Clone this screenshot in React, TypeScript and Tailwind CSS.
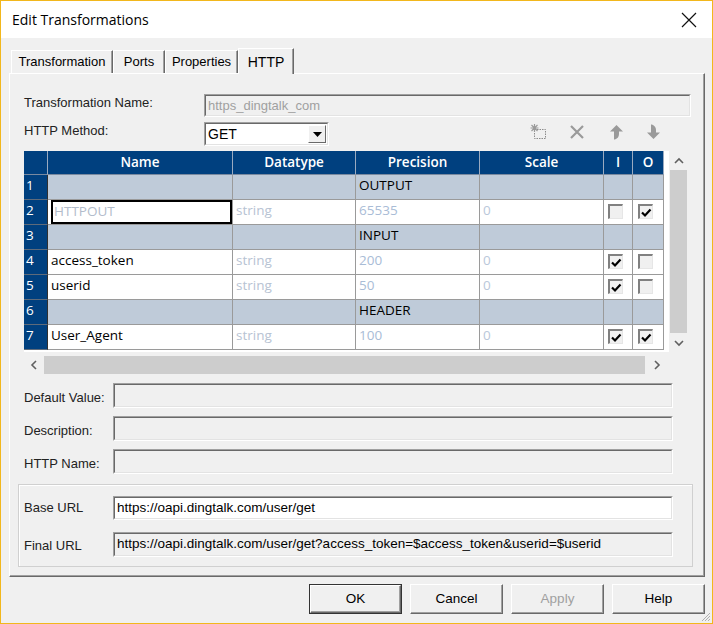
import React from "react";

const grid = "font-['Open_Sans',sans-serif] text-[13.5px]";

type Row = {
  group?: string;
  name?: string;
  dim?: boolean;
  focus?: boolean;
  i?: boolean;
  o?: boolean;
};

const rows: Row[] = [
  { group: "OUTPUT" },
  { name: "HTTPOUT", dim: true, focus: true, i: false, o: true },
  { group: "INPUT" },
  { name: "access_token", i: true, o: false },
  { name: "userid", i: true, o: false },
  { group: "HEADER" },
  { name: "User_Agent", i: true, o: true },
];
const prec = ["", "65535", "", "200", "50", "", "100"];

function Sunken({ className = "", inner = "", children }: { className?: string; inner?: string; children?: React.ReactNode }) {
  return (
    <div className={`border border-t-[#a0a0a0] border-l-[#a0a0a0] border-r-white border-b-white ${className}`}>
      <div className={`h-full border border-t-[#696969] border-l-[#696969] border-r-[#e3e3e3] border-b-[#e3e3e3] ${inner}`}>{children}</div>
    </div>
  );
}

function Check({ on }: { on?: boolean }) {
  return (
    <div className="w-[15px] h-[15px] border-t-2 border-l-2 border-t-[#808080] border-l-[#808080] border-r border-b border-r-[#e6e6e6] border-b-[#e6e6e6] bg-[#f0f0f0] flex items-end justify-center">
      {on && (
        <svg width="11" height="10" viewBox="0 0 11 10">
          <path d="M1 4.5 L4 7.5 L9.5 1.5" stroke="#000" strokeWidth="2.2" fill="none" />
        </svg>
      )}
    </div>
  );
}

function Btn({ label, def, off }: { label: string; def?: boolean; off?: boolean }) {
  return (
    <div className={`w-[93px] h-[30px] ${def ? "border border-[#333]" : ""}`}>
      <div className="h-full border border-t-white border-l-white border-r-[#696969] border-b-[#696969] shadow-[inset_-1px_-1px_0_#a0a0a0] flex items-center justify-center">
        <span className={off ? "text-[#a0a0a0]" : "text-black"}>{label}</span>
      </div>
    </div>
  );
}

function Chevron({ dir }: { dir: "up" | "down" | "left" | "right" }) {
  const d = {
    up: "M1 6 L5 2 L9 6",
    down: "M1 2 L5 6 L9 2",
    left: "M6 1 L2 5 L6 9",
    right: "M2 1 L6 5 L2 9",
  }[dir];
  const wide = dir === "up" || dir === "down";
  return (
    <svg width={wide ? 10 : 8} height={wide ? 8 : 10} viewBox={wide ? "0 0 10 8" : "0 0 8 10"}>
      <path d={d} stroke="#606060" strokeWidth="1.6" fill="none" />
    </svg>
  );
}

export default function App() {
  return (
    <div className="relative w-[713px] h-[624px] border border-[#f2b71c] bg-[#f0f0f0] flex flex-col font-['Liberation_Sans',Arial,sans-serif] text-[13px] text-black overflow-hidden">
      {/* title bar */}
      <div className="h-[37px] bg-white flex items-center justify-between pl-[11px] pr-[12px]">
        <span className="font-['Open_Sans',sans-serif] text-[14px] text-black">Edit Transformations</span>
        <svg width="16" height="16" viewBox="0 0 16 16" className="mr-[3px]">
          <path d="M1 1 L15 15 M15 1 L1 15" stroke="#111" strokeWidth="1.2" />
        </svg>
      </div>

      {/* tabs */}
      <div className="h-[35px] flex items-end pl-[10px]">
        {[
          { t: "Transformation", w: "w-[102px]" },
          { t: "Ports", w: "w-[52px]" },
          { t: "Properties", w: "w-[73px]" },
        ].map((tab) => (
          <div key={tab.t} className={`${tab.w} h-[23px] border-t border-l border-t-white border-l-white border-r border-r-[#696969] shadow-[inset_-1px_0_0_#a0a0a0] flex items-center justify-center`}>
            {tab.t}
          </div>
        ))}
        <div className="relative z-10 w-[56px] h-[26px] -mb-[1px] bg-[#f0f0f0] border-t border-l border-t-white border-l-white border-r border-r-[#696969] shadow-[inset_-1px_0_0_#a0a0a0] flex items-start justify-center pt-[3px] text-[14px]">
          HTTP
        </div>
      </div>

      {/* panel */}
      <div className="ml-[8px] w-[696px] h-[504px] border border-t-white border-l-white border-r-[#696969] border-b-[#696969] shadow-[inset_-1px_-1px_0_#a0a0a0] flex flex-col pl-[14px]">
        <div className="flex h-[23px] mt-[20px]">
          <div className="w-[180px] pt-[1px] leading-[15px] text-[#222]">Transformation Name:</div>
          <Sunken className="w-[487px] bg-[#f0f0f0]" inner="flex items-center pl-[2px] text-[#a0a0a0]">
            https_dingtalk_com
          </Sunken>
        </div>

        <div className="flex h-[24px] mt-[5px]">
          <div className="w-[180px] pt-[1px] leading-[15px] text-[#222]">HTTP Method:</div>
          <Sunken className="w-[125px]" inner="bg-white flex items-center">
            <span className="flex-1 pl-[2px] text-[14px]">GET</span>
            <div className="w-[18px] h-[18px] mr-[1px] border border-t-white border-l-white border-r-[#696969] border-b-[#696969] bg-[#f0f0f0] flex items-center justify-center">
              <svg width="9" height="5" viewBox="0 0 9 5">
                <path d="M0 0 H9 L4.5 5 Z" fill="#000" />
              </svg>
            </div>
          </Sunken>
          <div className="flex items-center ml-[201px] -mt-[4px]">
            <svg width="17" height="16" viewBox="0 0 17 16">
              <rect x="4.5" y="5.5" width="11" height="9" stroke="#8c8c8c" strokeDasharray="1.5 1" fill="none" />
              <path d="M4.5 0 V8 M0.5 4 H8.5 M1.5 1 L7.5 7 M7.5 1 L1.5 7" stroke="#9a9a9a" strokeWidth="1.2" />
            </svg>
            <svg width="16" height="16" viewBox="0 0 16 16" className="ml-[22px]">
              <path d="M2 2 L14 14 M14 2 L2 14" stroke="#9a9a9a" strokeWidth="2.2" />
            </svg>
            <svg width="15" height="16" viewBox="0 0 15 16" className="ml-[24px]">
              <path d="M7.5 1 L14 7.5 L10 7.5 L10 10 Q10 14 6 15.5 L5 15.5 L5 7.5 L1 7.5 Z" fill="#9a9a9a" />
            </svg>
            <svg width="15" height="16" viewBox="0 0 15 16" className="ml-[22px]">
              <path d="M7.5 15 L14 8.5 L10 8.5 L10 6 Q10 2 6 0.5 L5 0.5 L5 8.5 L1 8.5 Z" fill="#9a9a9a" />
            </svg>
          </div>
        </div>

        {/* grid widget */}
        <div className={`mt-[5px] w-[664px] h-[226px] flex flex-col ${grid}`}>
          <div className="flex h-[201px]">
            <div className="w-[645px] bg-white">
              <div className="grid grid-cols-[24px_185px_123px_124px_124px_29px_31px] w-[640px]">
                {["", "Name", "Datatype", "Precision", "Scale", "I", "O"].map((h, k) => (
                  <div key={k} className="h-[24px] bg-[#00407f] border-r border-b border-r-[#9aaac0] border-b-[#7a8aa0] flex items-center justify-center text-white font-semibold">
                    {h}
                  </div>
                ))}
                {rows.map((r, n) => {
                  const g = !!r.group;
                  const cell = `h-[25px] border-r border-b border-[#9a9a9a] leading-[20px] pl-[3px] ${g ? "bg-[#bfcbd9]" : "bg-white"}`;
                  return (
                    <React.Fragment key={n}>
                      <div className="h-[25px] bg-[#00407f] border-r border-b border-r-[#303030] border-b-[#5f6b7a] text-white pl-[2px] leading-[20px]">{n + 1}</div>
                      <div className={`${cell} ${r.focus ? "p-0" : ""}`}>
                        {r.focus ? (
                          <div className="h-full border-2 border-black pl-[1px] leading-[18px] text-[#b2bccb]">{r.name}</div>
                        ) : (
                          <span className={r.dim ? "text-[#b2bccb]" : "text-black"}>{r.name}</span>
                        )}
                      </div>
                      <div className={`${cell} text-[#b7c3d3]`}>{g ? "" : "string"}</div>
                      <div className={`${cell} ${g ? "text-black" : "text-[#a9bcd6]"}`}>{g ? r.group : prec[n]}</div>
                      <div className={`${cell} text-[#bac8da]`}>{g ? "" : "0"}</div>
                      <div className={`${cell} pl-[4px] pt-[4px]`}>{!g && <Check on={r.i} />}</div>
                      <div className={`${cell} pl-[5px] pt-[4px]`}>{!g && <Check on={r.o} />}</div>
                    </React.Fragment>
                  );
                })}
              </div>
            </div>
            <div className="w-[19px] flex flex-col items-center">
              <div className="h-[19px] flex items-center justify-center">
                <Chevron dir="up" />
              </div>
              <div className="w-[17px] flex-1 bg-[#cdcdcd]" />
              <div className="h-[19px] flex items-center justify-center">
                <Chevron dir="down" />
              </div>
            </div>
          </div>
          <div className="flex h-[25px] items-center">
            <div className="w-[645px] h-[19px] flex items-center">
              <div className="w-[20px] flex justify-center">
                <Chevron dir="left" />
              </div>
              <div className="flex-1 h-[18px] bg-[#cdcdcd]" />
              <div className="w-[24px] flex justify-center">
                <Chevron dir="right" />
              </div>
            </div>
          </div>
        </div>

        {/* attribute fields */}
        {[
          { l: "Default Value:", mt: "mt-[6px]" },
          { l: "Description:", mt: "mt-[8px]" },
          { l: "HTTP Name:", mt: "mt-[8px]" },
        ].map((f) => (
          <div key={f.l} className={`flex h-[25px] ${f.mt}`}>
            <div className="w-[89px] pt-[7px] leading-[15px] text-[#222]">{f.l}</div>
            <Sunken className="w-[560px]" />
          </div>
        ))}

        {/* url group */}
        <div className="-ml-[6px] mt-[10px] w-[675px] h-[83px] border border-[#d0d0d0] shadow-[inset_1px_1px_0_#fff] pl-[5px] flex flex-col">
          <div className="flex h-[24px] mt-[11px]">
            <div className="w-[89px] pt-[4px] leading-[15px] text-[#222]">Base URL</div>
            <Sunken className="w-[560px]" inner="bg-white flex items-center pl-[2px] text-[13.5px]">
              https://oapi.dingtalk.com/user/get
            </Sunken>
          </div>
          <div className="flex h-[25px] mt-[12px]">
            <div className="w-[89px] pt-[6px] leading-[15px] text-[#222]">Final URL</div>
            <Sunken className="w-[560px]" inner="flex items-center pl-[2px] text-[13.5px]">
              https://oapi.dingtalk.com/user/get?access_token=$access_token&amp;userid=$userid
            </Sunken>
          </div>
        </div>
      </div>

      {/* buttons */}
      <div className="flex justify-end gap-[8px] pr-[7px] pt-[7px] text-[13.5px]">
        <Btn label="OK" def />
        <Btn label="Cancel" />
        <Btn label="Apply" off />
        <Btn label="Help" />
      </div>

      <svg width="12" height="12" viewBox="0 0 12 12" className="absolute right-[1px] bottom-[1px]">
        <path d="M11 3 L3 11 M11 6 L6 11 M11 9 L9 11" stroke="#b0b0b0" strokeWidth="1" />
      </svg>
    </div>
  );
}
